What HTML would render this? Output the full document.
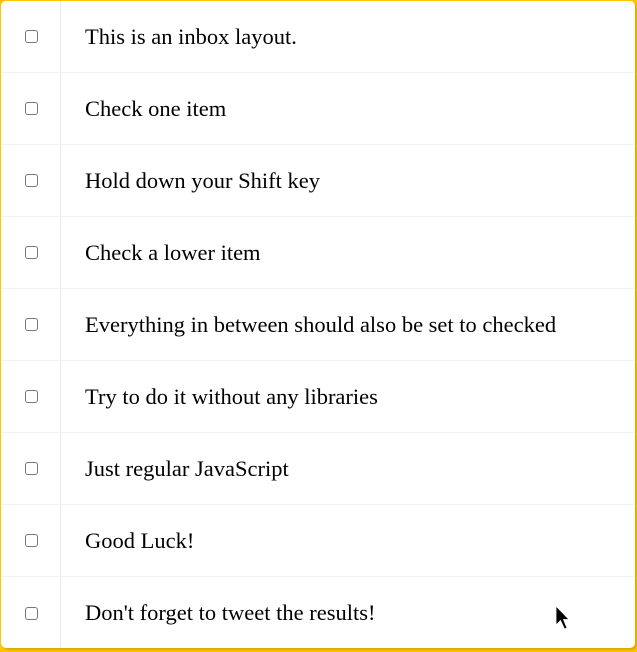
<!DOCTYPE html>
<html><head><style>
html,body{margin:0;padding:0;}
body{background:#ffc600;width:637px;height:652px;overflow:hidden;position:relative;font-family:"Liberation Serif",serif;}
.inbox{position:absolute;left:1px;top:1px;width:634px;height:647px;background:#fff;border-radius:5px;box-shadow:2px 2px 2px rgba(0,0,0,0.15);overflow:hidden;}
.item{display:flex;align-items:center;height:71px;border-bottom:1px solid #f1f1f1;}
.item:last-child{border-bottom:0;height:72px;}
.cb{width:60px;height:100%;display:flex;align-items:center;justify-content:center;border-right:1px solid #e3e8f2;box-sizing:border-box;padding-left:2px;}
.cb span{width:11px;height:11px;border:1px solid #767676;border-radius:3px;display:block;}
p{margin:0;padding-left:24px;font-size:22.5px;color:#000;}
</style></head><body>
<div class="inbox">
<div class="item"><div class="cb"><span></span></div><p>This is an inbox layout.</p></div>
<div class="item"><div class="cb"><span></span></div><p>Check one item</p></div>
<div class="item"><div class="cb"><span></span></div><p>Hold down your Shift key</p></div>
<div class="item"><div class="cb"><span></span></div><p>Check a lower item</p></div>
<div class="item"><div class="cb"><span></span></div><p>Everything in between should also be set to checked</p></div>
<div class="item"><div class="cb"><span></span></div><p>Try to do it without any libraries</p></div>
<div class="item"><div class="cb"><span></span></div><p>Just regular JavaScript</p></div>
<div class="item"><div class="cb"><span></span></div><p>Good Luck!</p></div>
<div class="item"><div class="cb"><span></span></div><p>Don't forget to tweet the results!</p></div>
</div>
<svg style="position:absolute;left:555px;top:605px" width="18" height="28" viewBox="0 0 18 28"><path d="M1 1 L1 20 L5.5 15.5 L9.5 24 L12 23 L8.5 14.5 L14 14.5 Z" fill="#000" stroke="#fff" stroke-width="0.8"/></svg>
</body></html>
